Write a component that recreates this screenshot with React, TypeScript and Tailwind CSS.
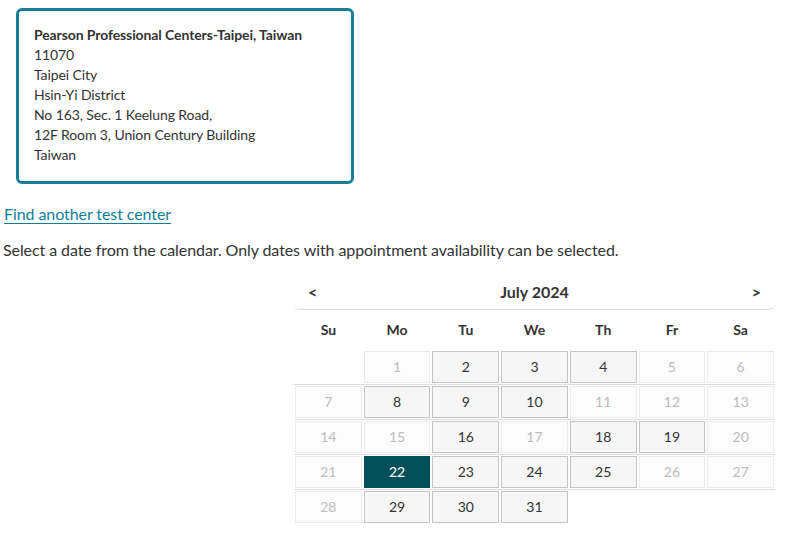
import React from 'react';

type Day = { n: number; open: boolean } | null;

const weekdays = ['Su', 'Mo', 'Tu', 'We', 'Th', 'Fr', 'Sa'];

const openDays = [2, 3, 4, 8, 9, 10, 16, 18, 19, 22, 23, 24, 25, 29, 30, 31];
const selectedDay = 22;

// July 2024 starts on a Monday
const buildWeeks = (): Day[][] => {
  const cells: Day[] = [null];
  for (let d = 1; d <= 31; d++) cells.push({ n: d, open: openDays.includes(d) });
  const weeks: Day[][] = [];
  for (let i = 0; i < cells.length; i += 7) weeks.push(cells.slice(i, i + 7));
  return weeks;
};

const DayCell: React.FC<{ day: Day }> = ({ day }) => {
  if (!day) return <div className="h-[32px]" />;
  if (day.n === selectedDay) {
    return (
      <div className="h-[32px] flex items-center justify-center bg-[#034f59] border border-[#034f59] text-white text-sm">
        {day.n}
      </div>
    );
  }
  if (day.open) {
    return (
      <div className="h-[32px] flex items-center justify-center bg-[#f6f6f6] border border-[#c5c5c5] text-[#333] text-sm">
        {day.n}
      </div>
    );
  }
  return (
    <div className="h-[32px] flex items-center justify-center bg-[#fcfcfc] border border-[#ebebeb] text-[#bdbdbd] text-sm">
      {day.n}
    </div>
  );
};

const App: React.FC = () => {
  const weeks = buildWeeks();

  return (
    <div className="min-h-[537px] bg-white text-[#333] font-['Lato','Liberation_Sans',sans-serif]">
      <div className="ml-[16px] mt-[8px] w-[338px] h-[176px] border-[3px] border-[#167f97] rounded-[6px] pt-[14px] pl-[15px] text-sm leading-5 tracking-[-0.1px]">
        <div className="font-bold">Pearson Professional Centers-Taipei, Taiwan</div>
        <div>11070</div>
        <div>Taipei City</div>
        <div>Hsin-Yi District</div>
        <div>No 163, Sec. 1 Keelung Road,</div>
        <div>12F Room 3, Union Century Building</div>
        <div>Taiwan</div>
      </div>

      <a href="#" className="inline-block ml-[4px] mt-[18px] text-base leading-6 text-[#0f7f98] underline underline-offset-[3px] tracking-[-0.08px]">
        Find another test center
      </a>

      <p className="ml-[3px] mt-[12px] text-base leading-6 tracking-[-0.08px]">
        Select a date from the calendar. Only dates with appointment availability can be selected.
      </p>

      <div className="ml-[294px] mt-[13px] w-[481px]">
        <div className="h-[35px] flex items-center justify-between px-[14px] border-b border-[#dcdcdc] rounded-b-[6px]">
          <span className="text-base font-bold">&lt;</span>
          <span className="text-base font-bold">July 2024</span>
          <span className="text-base font-bold">&gt;</span>
        </div>

        <div className="grid grid-cols-7 h-[40px] items-center text-sm font-bold">
          {weekdays.map((w) => (
            <div key={w} className="text-center">{w}</div>
          ))}
        </div>

        {weeks.map((week, i) => (
          <div
            key={i}
            className={`grid grid-cols-7 border-t ${i === 0 ? 'border-transparent py-[1px] -mt-[1px]' : 'border-[#dedede] pt-[1px] pb-[1px]'}`}
          >
            {week.map((day, j) => (
              <div key={j} className="px-[1px]">
                <DayCell day={day} />
              </div>
            ))}
          </div>
        ))}
      </div>
    </div>
  );
};

export default App;
